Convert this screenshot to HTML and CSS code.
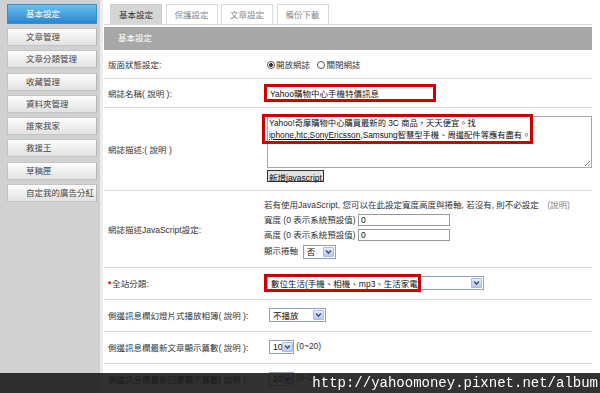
FILE: index.html
```html
<!DOCTYPE html>
<html lang="zh-Hant">
<head>
  <meta charset="UTF-8" />
  <meta name="viewport" content="width=device-width, initial-scale=1.0"/>
  <title>基本設定</title>
  <link rel="stylesheet" href="styles.css">
</head>
<body>
  <div class="page">
    <aside class="sidebar">
      <ul class="nav">
        <li class="nav-item active">基本設定</li>
        <li class="nav-item">文章管理</li>
        <li class="nav-item">文章分類管理</li>
        <li class="nav-item">收藏管理</li>
        <li class="nav-item">資料夾管理</li>
        <li class="nav-item">誰來我家</li>
        <li class="nav-item">救援王</li>
        <li class="nav-item">草稿匣</li>
        <li class="nav-item">自定我的廣告分紅</li>
      </ul>
    </aside>

    <main class="main">
      <div class="tabs">
        <span class="tab active">基本設定</span>
        <span class="tab">保護設定</span>
        <span class="tab">文章設定</span>
        <span class="tab">備份下載</span>
      </div>

      <div class="section-title">基本設定</div>

      <table class="settings">
        <tr class="row-status">
          <td class="label">版面狀態設定:</td>
          <td>
            <label class="radio-label"><span class="radio checked"></span>開放網誌</label>
            <label class="radio-label"><span class="radio"></span>關閉網誌</label>
          </td>
        </tr>
        <tr class="row-name">
          <td class="label">網誌名稱( 說明 ):</td>
          <td><input class="name-input" type="text" value="Yahoo購物中心手機特價訊息" /></td>
        </tr>
        <tr class="row-desc">
          <td class="label">網誌描述:( 說明 )</td>
          <td>
            <div class="desc-wrap">
              <div class="desc">Yahoo!奇摩購物中心購買最新的 3C 商品，天天便宜。找<br><span class="spell">iphone,htc,SonyEricsson</span>,Samsung智慧型手機、周邊配件等應有盡有。</div>
              <span class="highlight desc-highlight"></span>
              <svg class="grip" width="7" height="7" viewBox="0 0 7 7">
                <path d="M6 1 L1 6 M6 4 L4 6" stroke="#999" stroke-width="1" fill="none"/>
              </svg>
            </div>
            <button class="btn" type="button">新增javascript</button>
          </td>
        </tr>
        <tr class="row-js">
          <td class="label">網誌描述JavaScript設定:</td>
          <td>
            <div class="js-line">若有使用JavaScript, 您可以在此設定寬度高度與捲軸, 若沒有, 則不必設定 <span class="muted">(說明)</span></div>
            <div class="js-line">寬度 (0 表示系統預設值) <input class="small-input" type="text" value="0" /></div>
            <div class="js-line">高度 (0 表示系統預設值) <input class="small-input" type="text" value="0" /></div>
            <div class="js-line">顯示捲軸 &nbsp;<span class="select select-md"><span>否</span><span class="select-arrow"><svg width="9" height="8" viewBox="0 0 9 8"><path d="M2 2.5 L4.5 5 L7 2.5" stroke="#3d5688" stroke-width="1.6" fill="none"/></svg></span></span></div>
          </td>
        </tr>
        <tr class="row-std">
          <td class="label"><span class="required">*</span>全站分類:</td>
          <td>
            <span class="cat-wrap">
              <span class="select select-xl"><span>數位生活(手機、相機、mp3、生活家電)</span><span class="select-arrow"><svg width="9" height="8" viewBox="0 0 9 8"><path d="M2 2.5 L4.5 5 L7 2.5" stroke="#3d5688" stroke-width="1.6" fill="none"/></svg></span></span>
              <span class="highlight cat-highlight"></span>
            </span>
          </td>
        </tr>
        <tr class="row-std">
          <td class="label">側邊訊息欄幻燈片式播放相簿( 說明 ):</td>
          <td><span class="select select-lg"><span>不播放</span><span class="select-arrow"><svg width="9" height="8" viewBox="0 0 9 8"><path d="M2 2.5 L4.5 5 L7 2.5" stroke="#3d5688" stroke-width="1.6" fill="none"/></svg></span></span></td>
        </tr>
        <tr class="row-std">
          <td class="label">側邊訊息欄最新文章顯示篇數( 說明 ):</td>
          <td><span class="select select-sm"><span>10</span><span class="select-arrow"><svg width="9" height="8" viewBox="0 0 9 8"><path d="M2 2.5 L4.5 5 L7 2.5" stroke="#3d5688" stroke-width="1.6" fill="none"/></svg></span></span> (0~20)</td>
        </tr>
        <tr class="row-std">
          <td class="label">側邊訊息欄最新回覆顯示篇數( 說明 ):</td>
          <td><span class="select select-sm"><span>10</span><span class="select-arrow"><svg width="9" height="8" viewBox="0 0 9 8"><path d="M2 2.5 L4.5 5 L7 2.5" stroke="#3d5688" stroke-width="1.6" fill="none"/></svg></span></span> (0~20)</td>
        </tr>
      </table>
    </main>
  </div>

  <div class="watermark">http://yahoomoney.pixnet.net/album</div>
</body>
</html>
```

FILE: styles.css
```css
* { box-sizing: border-box; }

body {
  margin: 0;
  overflow: hidden;
  font-family: "Liberation Sans", "Noto Sans CJK TC", sans-serif;
  font-size: 8.5px;
  color: #333;
  background: #fff;
}

.page {
  display: flex;
  height: 393px;
}

/* sidebar */
.sidebar {
  width: 103px;
  flex-shrink: 0;
  background: #d1d1d1;
  border-right: 3px solid #ededed;
  padding-top: 4px;
}

.nav {
  list-style: none;
  margin: 0;
  padding: 0;
}

.nav-item {
  margin: 0 0 4.3px 7px;
  width: 90px;
  height: 18px;
  line-height: 16px;
  padding-left: 18px;
  color: #444;
  background: linear-gradient(#fdfdfd, #e2e2e2);
  border: 1px solid #c4c4c4;
  border-right-color: #b5b5b5;
}

.nav-item.active {
  height: 20px;
  line-height: 18px;
  margin-bottom: 4px;
  color: #fff;
  background: linear-gradient(#6cc0ee, #2a85cc);
  border-color: #3b8fcf;
}

/* main */
.main {
  flex: 1;
  padding: 4px 8px 0 1px;
}

.tabs {
  display: flex;
  gap: 3.5px;
  padding-left: 6px;
  border-bottom: 1px solid #d4d4d4;
}

.tab {
  width: 52px;
  height: 20px;
  line-height: 20px;
  text-align: center;
  color: #888;
  background: #fff;
  border: 1px solid #dadada;
  border-bottom: none;
}

.tab.active {
  color: #333;
  background: #d6d6d6;
  border-color: #d0d0d0;
}

.section-title {
  margin-top: 2px;
  height: 23px;
  line-height: 23px;
  padding-left: 14px;
  color: #fff;
  background: #a7a7a7;
}

/* settings table */
.settings {
  width: 100%;
  border-collapse: collapse;
}

.settings td {
  padding: 0;
  border-bottom: 1px solid #dcdcdc;
  vertical-align: middle;
}

.settings td.label {
  width: 161px;
  padding-left: 4px;
}

.row-status td { height: 28px; }
.row-name td { height: 29px; }
.row-desc td { height: 83px; }
.row-js td { height: 77px; }
.row-std td { height: 32px; }

.radio-label {
  margin-left: 3px;
  margin-right: 2px;
}

.radio {
  display: inline-block;
  width: 8px;
  height: 8px;
  margin-right: 1px;
  vertical-align: -1px;
  border: 1px solid #555;
  border-radius: 50%;
  background: #fff;
}

.radio.checked {
  background: radial-gradient(circle, #333 0 1.6px, #fff 2.2px);
}

.name-input {
  display: block;
  width: 172px;
  height: 18px;
  padding: 0 3px;
  border: 3px solid #d10000;
  font: inherit;
  color: #111;
}

.desc-wrap {
  position: relative;
  margin: 1px 0 0 3px;
  width: 325px;
}

.desc {
  height: 52px;
  padding: 0 1px;
  font-size: 8.3px;
  line-height: 12px;
  color: #111;
  border: 1px solid #a8a8a8;
}

.spell {
  text-decoration: underline;
}

.grip {
  position: absolute;
  right: 1px;
  bottom: 1px;
}

.highlight {
  position: absolute;
  border: 3px solid #d10000;
}

.desc-highlight {
  left: -5px;
  top: -2px;
  width: 271px;
  height: 30px;
}

.btn {
  display: block;
  margin: 2px 0 0 3px;
  height: 12px;
  padding: 0 1px;
  line-height: 10px;
  font: inherit;
  color: #111;
  background: #e2e2e2;
  border: 1px solid #333;
}

.js-line {
  height: 12px;
  line-height: 12px;
  margin-top: 3px;
  white-space: nowrap;
}

.js-line:first-child {
  margin-top: 0;
  margin-bottom: 0;
}

.js-line:last-child {
  height: 14px;
  line-height: 14px;
}

.muted {
  color: #888;
  margin-left: 6px;
}

.small-input {
  width: 92px;
  height: 12px;
  padding: 0 2px;
  vertical-align: top;
  font: inherit;
  color: #111;
  border: 1px solid #999;
}

.select {
  display: inline-flex;
  align-items: center;
  justify-content: space-between;
  height: 14px;
  padding-left: 3px;
  vertical-align: middle;
  color: #111;
  background: #fff;
  border: 1px solid #8ea3c4;
}

.select-sm { width: 25px; margin-left: 5px; }
.select-md { width: 33px; }
.select-lg { width: 57px; margin-left: 5px; }
.select-xl { width: 217px; margin-left: 3px; }

.select-arrow {
  display: flex;
  align-items: center;
  justify-content: center;
  width: 11px;
  height: 10px;
  margin-right: 1px;
  background: linear-gradient(#e6eefb, #b6caee);
  border: 1px solid #a7bce4;
  border-radius: 1px;
}

.required {
  color: #d10000;
  font-weight: bold;
  margin-right: 1px;
}

.cat-wrap {
  position: relative;
  display: inline-block;
}

.cat-highlight {
  left: 0;
  top: -2px;
  width: 157px;
  height: 18px;
}

/* watermark */
.watermark {
  position: fixed;
  left: 0;
  right: 0;
  bottom: 0;
  height: 20px;
  padding-right: 2px;
  line-height: 20px;
  text-align: right;
  font-family: "Liberation Mono", monospace;
  font-size: 14px;
  color: #fff;
  background: rgba(22, 22, 22, 0.88);
}
```
